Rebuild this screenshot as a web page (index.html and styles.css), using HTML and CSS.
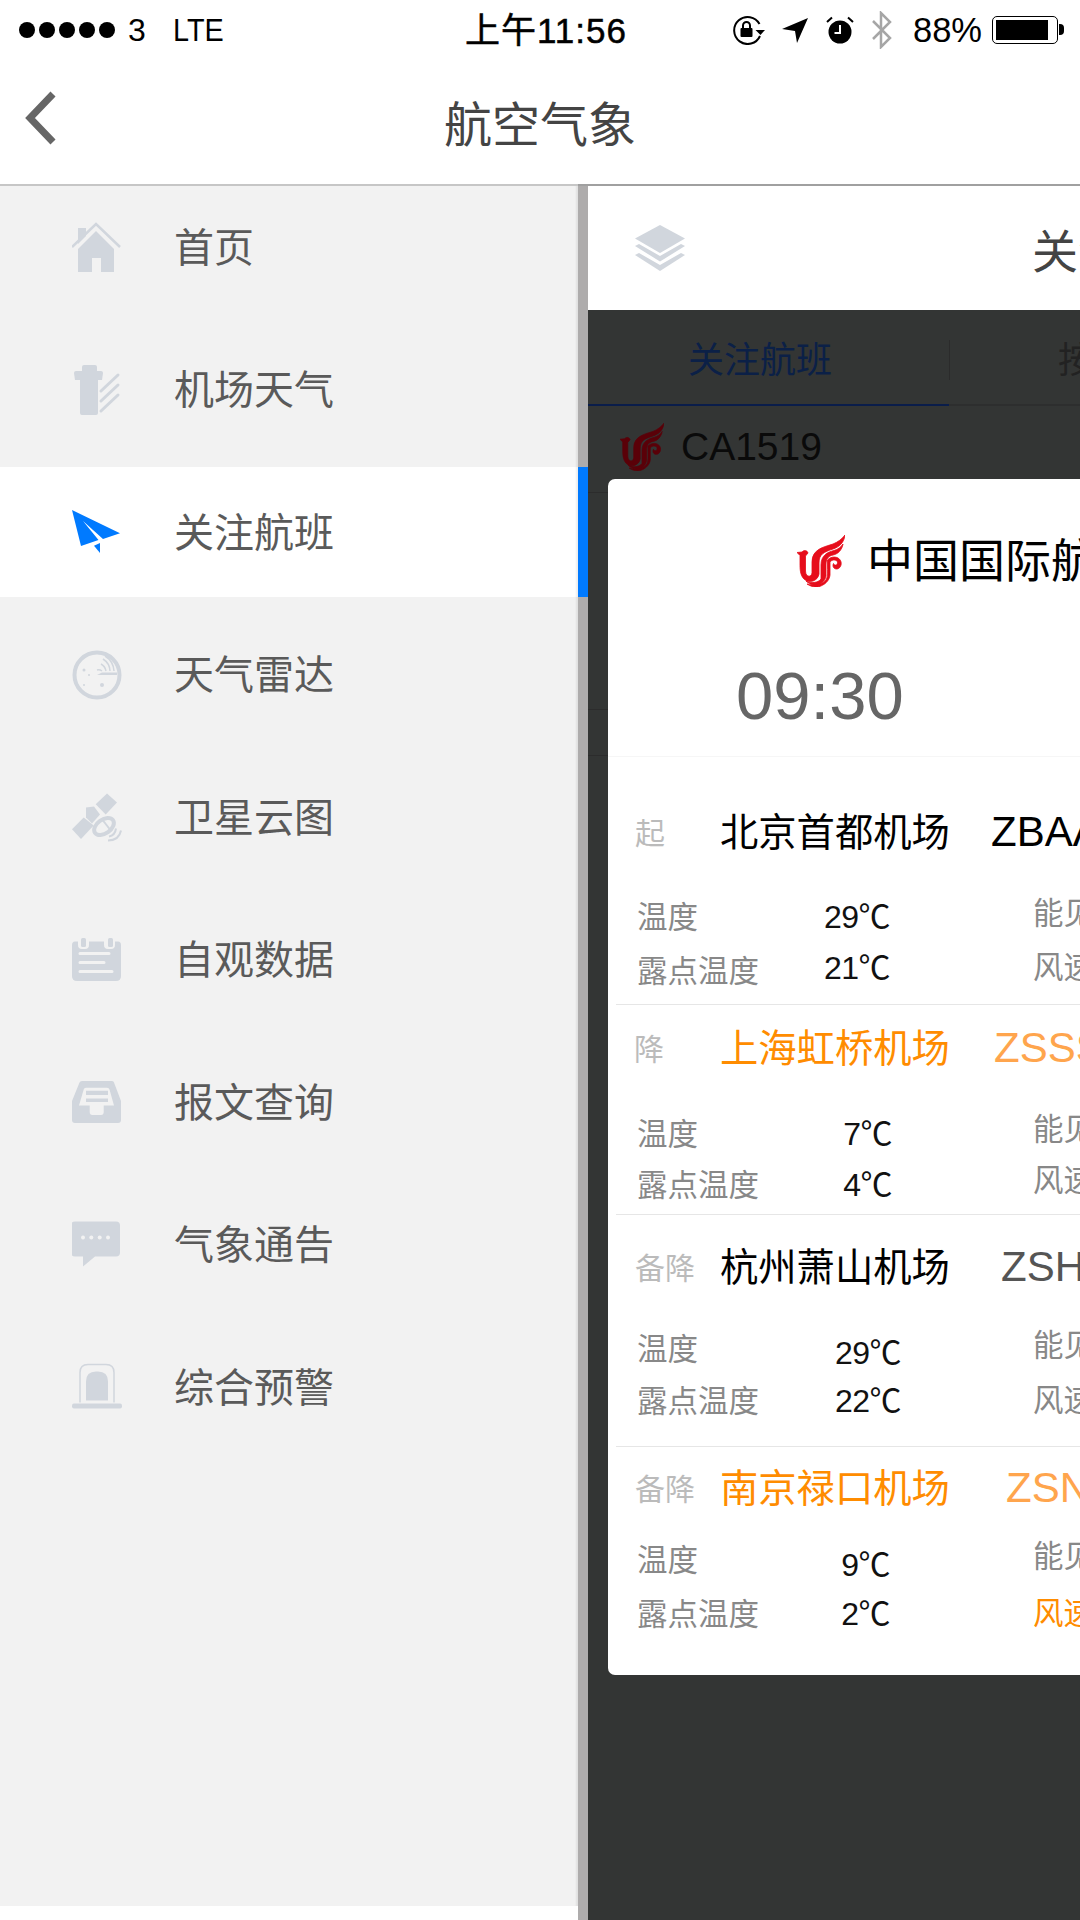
FILE: index.html
```html
<!DOCTYPE html>
<html lang="zh-CN">

<head>
    <meta charset="UTF-8">
    <title>航空气象</title>
    <link rel="stylesheet" href="styles.css">
</head>

<body>
    <svg class="defs" width="0" height="0">
        <!-- 国航标志 -->
        <symbol id="phoenix" viewBox="0 0 48 52">
            <path d="M0 17.500 L5 17 C7 15 10 15 11 18 L8.500 21 L8.500 36 C8.500 42 14 43 15 38 L15 27 C15 14 27 12 36 9 C41 7 45 4 48 0 C47 8 42 12 36 14 C27 17 22 19 22 28 L22 39 C21 46 12 49 7 44 C3 40 3 34 3 28 L3 20.500 Z" />
            <path d="M24 44 L24 30 C24 20 31 17 37 15.500 C41 14.500 44 12 46 9 C45 15 41 19 36 20 C31 21 29 24 29 30 L29 41 C28 46 25 48 22 49.500 C19 51 13 50 9 46 C14 48.500 21 48 24 44 Z" />
            <path d="M30.500 25 C34 21 41 21 43.500 25.500 C45.500 29.500 43 34 39.500 34 C37 34 35 31.500 36.500 28.500 C37.500 31 40.500 30.500 40.500 27.500 C40.500 24.500 35 24 33 27 L33 40 C32.500 46 27 50.500 21 52 C17 52.500 13 51 10 49 C16 51 26 50 29.500 44 C31 41 30.500 36 30.500 30 Z" />
        </symbol>
    </svg>

    <div class="statusbar">
        <div class="status-left">
            <span class="signal"><i></i><i></i><i></i><i></i><i></i></span>
            <span class="carrier">3</span>
            <span class="network">LTE</span>
        </div>
        <div class="status-time">上午11:56</div>
        <div class="status-right">
            <svg class="st-lock" viewBox="0 0 34 30">
                <path d="M29 21 A13.500 13.500 0 1 1 28.500 9" fill="none" stroke="#000" stroke-width="2" />
                <path d="M24.500 15 L34 15 L29.500 20 Z" />
                <rect x="9.500" y="13" width="12" height="9" rx="1" />
                <path d="M12 13 V10.500 A3.500 3.500 0 0 1 19 10.500 V13" fill="none" stroke="#000" stroke-width="2" />
            </svg>
            <svg class="st-arrow" viewBox="0 0 26 25">
                <path d="M0 11 L26 0 L15 25 L13 13 Z" />
            </svg>
            <svg class="st-alarm" viewBox="0 0 28 28">
                <circle cx="14" cy="16" r="11.500" />
                <path d="M14 9 V17 H8.500" fill="none" stroke="#fff" stroke-width="2" />
                <path d="M1 6 L6 1.500 M27 6 L22 1.500" fill="none" stroke="#000" stroke-width="2" />
            </svg>
            <svg class="st-bt" viewBox="0 0 22 38">
                <path d="M2 10 L19 27 L10 36 V2 L19 11 L2 28" fill="none" stroke="#a6a6a6" stroke-width="2.500" />
            </svg>
            <span class="st-percent">88%</span>
            <span class="battery"><i></i></span>
        </div>
    </div>

    <div class="navbar">
        <svg class="nav-back" viewBox="0 0 34 54">
            <path d="M29 3 L6 27 L29 51" fill="none" stroke="#666" stroke-width="7" />
        </svg>
        <h1 class="nav-title">航空气象</h1>
    </div>

    <div class="main">
        <div class="drawer">
            <ul class="menu">
                <li class="menu-item">
                    <svg class="menu-icon" viewBox="1 0 50 50">
                        <path d="M1 25 L25 2 L49 25" fill="none" stroke="#d1d6dd" stroke-width="2.500" />
                        <path d="M7 6 H15 V14 L7 22 Z" />
                        <path d="M7 27 L25 9 L43 27 V50 H30 V36 H21 V50 H7 Z" />
                    </svg>
                    <span>首页</span>
                </li>
                <li class="menu-item">
                    <svg class="menu-icon" viewBox="2 0 50 50">
                        <path d="M9 2 Q9 0 11 0 H22 Q24 0 24 2 V6 H28 Q30 6 30 8 L29 15 H25 V48 Q25 50 23 50 H9 Q7 50 7 48 V15 H2 L1 8 Q1 6 3 6 H9 Z" transform="translate(3 0)" />
                        <path d="M31 26 L48 10 M31 36 L48 20 M31 46 L48 30" fill="none" stroke="#d1d6dd" stroke-width="3" stroke-linecap="round" />
                    </svg>
                    <span>机场天气</span>
                </li>
                <li class="menu-item active">
                    <svg class="menu-icon" viewBox="1 -3 50 50">
                        <path d="M1 0 L49 23.300 L32 29 L12 11 L27.500 30 L10 36 Z" />
                        <path d="M23 35.700 L29 33 L29 43 Z" />
                    </svg>
                    <span>关注航班</span>
                </li>
                <li class="menu-item">
                    <svg class="menu-icon" viewBox="0 0 50 50">
                        <circle cx="25" cy="25" r="22.500" fill="none" stroke="#d1d6dd" stroke-width="4" />
                        <path d="M25 25 H45 V22.500 H30 L25 25 Z" />
                        <path d="M30 21 A6 6 0 0 0 25 20 M34 21 A10 10 0 0 0 29 14 M38 21 A15 15 0 0 0 31 9 M42 21 A19 19 0 0 0 33 6" fill="none" stroke="#d1d6dd" stroke-width="1.500" />
                        <circle cx="12" cy="20" r="1.500" />
                        <circle cx="17" cy="25" r="1" />
                        <circle cx="12" cy="35" r="1" />
                        <circle cx="30" cy="35" r="2" />
                    </svg>
                    <span>天气雷达</span>
                </li>
                <li class="menu-item">
                    <svg class="menu-icon" viewBox="0 -1.500 50 50">
                        <path d="M23.700 10.700 L35 0 L45 9 L33.700 21 Z" />
                        <path d="M0 35.700 L11.700 24 L21.700 32 L9 45.500 Z" />
                        <path d="M14 14 L22 13 L28 21 L20 30 L14 24 Z" />
                        <ellipse cx="32" cy="33" rx="11" ry="7" transform="rotate(-35 32 33)" fill="none" stroke="#d1d6dd" stroke-width="4" />
                        <path d="M31 27 L38 36" fill="none" stroke="#d1d6dd" stroke-width="2" />
                        <path d="M37 43 Q43 42 44 35 M36 47 Q47 47 49 37" fill="none" stroke="#d1d6dd" stroke-width="2" />
                    </svg>
                    <span>卫星云图</span>
                </li>
                <li class="menu-item">
                    <svg class="menu-icon" viewBox="0 -3 50 50">
                        <path d="M3 3.500 H6 V7 A4 4 0 0 0 10 11 H13 A4 4 0 0 0 17 7 V3.500 H32 V7 A4 4 0 0 0 36 11 H39 A4 4 0 0 0 43 7 V3.500 H46 Q49 3.500 49 7 V38 Q49 43 44 43 H5 Q0 43 0 38 V7 Q0 3.500 3 3.500 Z" />
                        <rect x="9" y="0" width="5" height="9" rx="1.500" />
                        <rect x="36" y="0" width="5" height="9" rx="1.500" />
                        <path d="M8 15.600 H37 M8 24.600 H32 M8 33.500 H40" fill="none" stroke="#f2f2f2" stroke-width="3" stroke-linecap="round" />
                    </svg>
                    <span>自观数据</span>
                </li>
                <li class="menu-item">
                    <svg class="menu-icon" viewBox="0 -4 50 50">
                        <path d="M10 0 H40 Q41.700 0 42 1.500 L49 20 V39 Q49 42 46 42 H3 Q0 42 0 39 V20 L7.500 1.500 Q8 0 10 0 Z" />
                        <path d="M7 24.500 L11.700 8.500 Q12 6.700 14 6.700 H35 Q37 6.700 37.500 8.500 L42 24.500 H31.700 V31 Q31.700 34 29 34 H20.500 Q17.700 34 17.700 31 V24.500 Z" fill="#f2f2f2" />
                        <path d="M14 9.800 H36 V14 H14 Z M14 17.500 H36 V21 H14 Z" />
                    </svg>
                    <span>报文查询</span>
                </li>
                <li class="menu-item">
                    <svg class="menu-icon" viewBox="1 -1.500 50 50">
                        <path d="M4 0 H45 Q49 0 49 4 V31 Q49 35 45 35 H24 L12 45 V35 H4 Q0 35 0 31 V4 Q0 0 4 0 Z" />
                        <circle cx="12" cy="16" r="2" fill="#f2f2f2" />
                        <circle cx="20.300" cy="16" r="2" fill="#f2f2f2" />
                        <circle cx="28.700" cy="16" r="2" fill="#f2f2f2" />
                        <circle cx="37" cy="16" r="2" fill="#f2f2f2" />
                    </svg>
                    <span>气象通告</span>
                </li>
                <li class="menu-item">
                    <svg class="menu-icon" viewBox="0 -1.500 50 50">
                        <path d="M8 39 V9 Q8 1 16 1 H34 Q42 1 42 9 V39" fill="none" stroke="#d1d6dd" stroke-width="1.500" />
                        <path d="M14 37 V18 Q14 8 24 8 H26 Q36 8 36 18 V37 Z" />
                        <rect x="0" y="40" width="50" height="5" rx="2" />
                    </svg>
                    <span>综合预警</span>
                </li>
            </ul>
        </div>

        <div class="pane">
            <div class="pane-head">
                <svg class="layers" viewBox="0 0 50 46">
                    <path d="M25 0 L50 13.500 L25 28 L0 13.500 Z" />
                    <path d="M0 21 L4 19 L25 31 L46 19 L50 21 L25 36.500 Z" />
                    <path d="M0 30 L4 28 L25 40 L46 28 L50 30 L25 46 Z" />
                </svg>
                <span class="pane-title">关注航班</span>
            </div>

            <div class="tabs">
                <div class="tab tab-on">关注航班</div>
                <div class="tab tab-off">按航班号查询</div>
            </div>

            <div class="flight-row">
                <svg class="logo-dim"><use href="#phoenix" /></svg>
                <span>CA1519</span>
            </div>
            <div class="flight-row flight-row-b"></div>
            <div class="flight-row flight-row-c"></div>

            <div class="modal">
                <div class="modal-head">
                    <div class="airline">
                        <svg class="logo-red"><use href="#phoenix" /></svg>
                        <span>中国国际航空</span>
                    </div>
                    <div class="dep-time">09:30</div>
                </div>

                <div class="leg leg-dep">
                    <div class="leg-title">
                        <span class="leg-tag">起</span>
                        <span class="leg-name">北京首都机场</span>
                        <span class="leg-code">ZBAA</span>
                    </div>
                    <div class="stats">
                        <span class="stat-label">温度</span>
                        <span class="stat-val">29℃</span>
                        <span class="stat-side">能见度</span>
                        <span class="stat-label">露点温度</span>
                        <span class="stat-val">21℃</span>
                        <span class="stat-side">风速</span>
                    </div>
                </div>

                <div class="leg leg-arr">
                    <div class="leg-title warn">
                        <span class="leg-tag">降</span>
                        <span class="leg-name">上海虹桥机场</span>
                        <span class="leg-code">ZSSS</span>
                    </div>
                    <div class="stats">
                        <span class="stat-label">温度</span>
                        <span class="stat-val">7℃</span>
                        <span class="stat-side">能见度</span>
                        <span class="stat-label">露点温度</span>
                        <span class="stat-val">4℃</span>
                        <span class="stat-side">风速</span>
                    </div>
                </div>

                <div class="leg leg-alt">
                    <div class="leg-title">
                        <span class="leg-tag">备降</span>
                        <span class="leg-name">杭州萧山机场</span>
                        <span class="leg-code">ZSHC</span>
                    </div>
                    <div class="stats">
                        <span class="stat-label">温度</span>
                        <span class="stat-val">29℃</span>
                        <span class="stat-side">能见度</span>
                        <span class="stat-label">露点温度</span>
                        <span class="stat-val">22℃</span>
                        <span class="stat-side">风速</span>
                    </div>
                </div>

                <div class="leg leg-alt2">
                    <div class="leg-title warn">
                        <span class="leg-tag">备降</span>
                        <span class="leg-name">南京禄口机场</span>
                        <span class="leg-code">ZSNJ</span>
                    </div>
                    <div class="stats">
                        <span class="stat-label">温度</span>
                        <span class="stat-val">9℃</span>
                        <span class="stat-side">能见度</span>
                        <span class="stat-label">露点温度</span>
                        <span class="stat-val">2℃</span>
                        <span class="stat-side stat-warn">风速</span>
                    </div>
                </div>
            </div>
        </div>
    </div>
</body>

</html>
```

FILE: styles.css
```css
* {
    box-sizing: border-box;
}

html,
body {
    margin: 0;
    padding: 0;
}

body {
    width: 1080px;
    height: 1920px;
    overflow: hidden;
    background: #fff;
    font-family: "Liberation Sans", "Noto Sans CJK SC", sans-serif;
}

.defs {
    position: absolute;
}

/* 状态栏 */
.statusbar {
    display: flex;
    align-items: center;
    height: 60px;
    padding-left: 19px;
    color: #000;
}

.status-left {
    display: flex;
    align-items: center;
    width: 446px;
    font-size: 32px;
}

.signal {
    display: flex;
    gap: 4px;
}

.signal i {
    width: 16px;
    height: 16px;
    border-radius: 50%;
    background: #000;
}

.carrier {
    margin-left: 13px;
}

.network {
    margin-left: 27px;
    transform: scaleX(.9);
    transform-origin: left;
}

.status-time {
    width: 266px;
    margin-top: -6px;
    font-size: 35px;
    letter-spacing: 1px;
    -webkit-text-stroke: .5px #000;
}

.status-right {
    display: flex;
    align-items: center;
}

.st-lock {
    width: 34px;
    height: 30px;
}

.st-arrow {
    width: 26px;
    height: 25px;
    margin-left: 17px;
}

.st-alarm {
    width: 28px;
    height: 28px;
    margin-left: 18px;
}

.st-bt {
    width: 22px;
    height: 38px;
    margin-left: 17px;
}

.st-percent {
    margin-left: 20px;
    font-size: 34.500px;
}

.battery {
    position: relative;
    width: 66px;
    height: 28px;
    margin-left: 10px;
    padding: 3px;
    border: 1.500px solid #000;
    border-radius: 5px;
}

.battery i {
    display: block;
    width: 52px;
    height: 100%;
    background: #000;
}

.battery::after {
    content: "";
    position: absolute;
    right: -7px;
    top: 7px;
    width: 5px;
    height: 11px;
    border-radius: 0 4px 4px 0;
    background: #000;
}

/* 导航栏 */
.navbar {
    display: grid;
    grid-template-columns: 1fr auto 1fr;
    height: 126px;
    border-bottom: 2px solid;
    border-image: linear-gradient(to right, #c6c6c6 578px, #a0a0a0 578px) 1;
}

.nav-back {
    width: 34px;
    height: 54px;
    margin: 31px 0 0 24px;
}

.nav-title {
    margin: 0;
    padding-top: 8px;
    font-size: 48px;
    font-weight: normal;
    line-height: 116px;
    color: #444;
}

/* 主体 */
.main {
    display: flex;
    height: 1734px;
}

.drawer {
    flex: none;
    width: 588px;
    border-right: 10px solid #aeacac;
}

.menu {
    list-style: none;
    height: 1720px;
    margin: 0;
    padding: 0;
    background: #f2f2f2;
    box-shadow: inset -3px 0 2px -1px rgba(0, 0, 0, .07);
}

.menu-item {
    display: flex;
    align-items: center;
    gap: 52px;
    position: relative;
    top: -4px;
    height: 130px;
    margin-bottom: 12.500px;
    padding-left: 72px;
    font-size: 40px;
    color: #5a5a5a;
}

.menu-item span {
    margin-top: -5px;
}

.menu-icon {
    flex: none;
    width: 50px;
    height: 50px;
    fill: #d1d6dd;
}

.menu-item.active {
    margin-right: -10px;
    background: #fff;
    border-right: 10px solid #007aff;
    box-shadow: inset -3px 0 2px -1px rgba(0, 0, 0, .07);
}

.active .menu-icon {
    fill: #007aff;
}

/* 右侧内容 */
.pane {
    position: relative;
    flex: none;
    width: 492px;
    overflow: hidden;
    background: #333534;
}

.pane-head {
    display: flex;
    align-items: center;
    height: 124px;
    padding-left: 47px;
    background: #fff;
}

.layers {
    flex: none;
    width: 50px;
    height: 46px;
    fill: #d1d6dd;
}

.pane-title {
    flex: none;
    margin-left: 347px;
    font-size: 46px;
    color: #444;
}

.tabs {
    display: flex;
    height: 96px;
    border-bottom: 2px solid #2d2e2e;
}

.tab {
    flex: none;
    height: 96px;
    font-size: 36px;
    line-height: 102px;
}

.tab-on {
    width: 361px;
    padding-left: 100px;
    border-bottom: 2px solid #0a1d4a;
    color: #0b2047;
}

.tab-off {
    position: relative;
    width: 361px;
    padding-left: 109px;
    color: #222;
}

.tab-off::before {
    content: "";
    position: absolute;
    left: 0;
    top: 30px;
    width: 1px;
    height: 40px;
    background: #2b2b2b;
}

.flight-row {
    display: flex;
    align-items: center;
    gap: 17px;
    height: 87px;
    padding: 0 0 4px 32px;
    border-bottom: 1px solid #2c2c2c;
    font-size: 39px;
    color: #0a0a0a;
}

.flight-row-b {
    height: 217px;
}

.flight-row-c {
    height: 46px;
}

.logo-dim {
    width: 44px;
    height: 48px;
    fill: #5a0008;
    stroke: #5a0008;
    stroke-width: .8px;
}

/* 弹层 */
.modal {
    position: absolute;
    left: 20px;
    top: 293px;
    width: 900px;
    height: 1196px;
    border-radius: 7px;
    background: #fff;
}

.modal-head {
    height: 278px;
    border-bottom: 1px solid #f6f6f6;
}

.airline {
    display: flex;
    align-items: center;
    gap: 22px;
    padding: 56px 0 0 189px;
    font-size: 46px;
    line-height: 52px;
    color: #000;
}

.logo-red {
    flex: none;
    width: 48px;
    height: 52px;
    fill: #e60d1b;
    stroke: #e60d1b;
    stroke-width: .8px;
}

.dep-time {
    padding: 69px 0 0 128px;
    font-size: 67px;
    line-height: 80px;
    color: #666;
}

.leg {
    margin-left: 8px;
    border-bottom: 1px solid #e6e6e6;
}

.leg-title {
    display: flex;
    align-items: center;
    height: 50px;
    padding-left: 19px;
    color: #000;
}

.leg-tag {
    flex: none;
    width: 85px;
    margin-top: -2px;
    font-size: 30px;
    color: #bbb;
}

.leg-name {
    flex: none;
    width: 230px;
    margin-top: -5px;
    font-size: 38.300px;
    white-space: nowrap;
}

.leg-code {
    margin-left: 41px;
    font-size: 42px;
}

.warn .leg-name {
    color: #ff8c00;
}

.warn .leg-code {
    color: #ffa54d;
}

.stats {
    display: grid;
    grid-template-columns: 189px 64px 143px 1fr;
    grid-auto-rows: 52px;
    padding-left: 21px;
    align-items: center;
    font-size: 30.500px;
    line-height: 40px;
    color: #888;
}

.stats span {
    white-space: nowrap;
}

.stats .stat-label {
    grid-column: 1;
}

.stat-val {
    grid-column: 2;
    justify-self: end;
    font-size: 32px;
    letter-spacing: -.5px;
    color: #111;
}

.stat-side {
    grid-column: 4;
    margin-top: -8px;
}

.stat-warn {
    color: #ff8c00;
}

.leg-dep {
    height: 248px;
    padding-top: 50px;
}

.leg-dep .stats {
    margin-top: 33px;
    grid-auto-rows: 54px;
}

.leg-dep .stat-val:nth-child(5) {
    margin-top: -6px;
}

.leg-arr {
    height: 210px;
    padding-top: 18px;
}

.leg-arr .leg-tag {
    margin-left: -1px;
    margin-right: 1px;
}

.leg-arr .leg-code {
    margin-left: 44px;
}

.leg-arr .stats {
    margin-top: 35px;
    grid-auto-rows: 51px;
}

.leg-arr .stat-val {
    margin-right: -2px;
}

.leg-arr .stat-side {
    margin-top: -10px;
}

.leg-alt {
    height: 232px;
    padding-top: 27px;
}

.leg-alt .leg-code {
    margin-left: 51px;
    color: #555;
}

.leg-alt .stats {
    margin-top: 31px;
}

.leg-alt .stat-val {
    margin-right: -11px;
}

.leg-alt .stat-val:nth-child(2) {
    margin-top: 7px;
}

.leg-alt .stat-side:last-child {
    margin-top: -2px;
}

.leg-alt2 {
    padding-top: 16px;
    border-bottom: 0;
}

.leg-alt2 .leg-code {
    margin-left: 56px;
}

.leg-alt2 .stats {
    margin-top: 20px;
    grid-auto-rows: 54px;
}

.leg-alt2 .stat-val {
    margin-right: 0;
}

.leg-alt2 .stat-val:nth-child(2) {
    margin-top: 9px;
}

.leg-alt2 .stat-side:last-child {
    margin-top: -3px;
}
```
